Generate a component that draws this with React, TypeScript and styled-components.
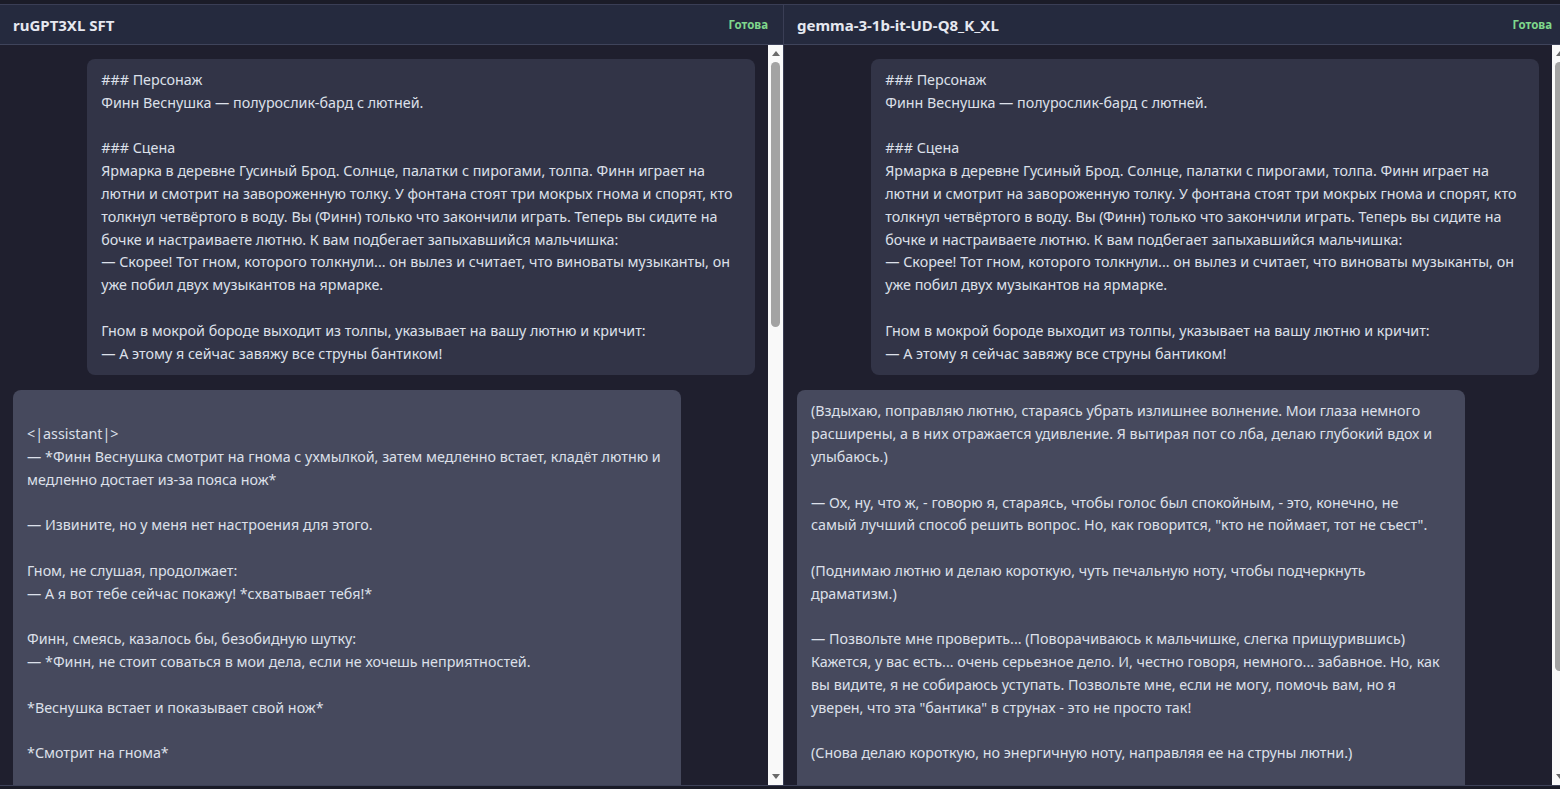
import React, { useLayoutEffect, useRef, useState } from "react";
import styled, { createGlobalStyle } from "styled-components";

const GlobalStyle = createGlobalStyle`
  html, body, #root {
    height: 100%;
  }
  body {
    margin: 0;
    overflow: hidden;
    background: #1a1b27;
    font-family: "Noto Sans", "Open Sans", sans-serif;
  }
`;

const Page = styled.div`
  height: 100vh;
  display: flex;
  flex-direction: column;
  overflow: hidden;
`;

const TopStrip = styled.div`
  height: 4px;
  flex: none;
  background: #1b1c28;
  border-bottom: 1px solid #3a3e55;
`;

const Columns = styled.div`
  flex: 1;
  min-height: 0;
  display: grid;
  grid-template-columns: 784px 784px;
  border-bottom: 1px solid #3d4158;
  margin-bottom: 3px;
`;

const Panel = styled.section`
  display: flex;
  flex-direction: column;
  min-height: 0;
  border-right: 1px solid #3a3e55;
  background: #1f1f2e;
`;

const Header = styled.header`
  height: 39px;
  flex: none;
  display: flex;
  align-items: center;
  justify-content: space-between;
  padding: 0 15px 0 13px;
  background: #252a3e;
  border-bottom: 1px solid #3f445b;
`;

const Title = styled.h2`
  margin: 0;
  font-size: 15px;
  font-weight: 700;
  color: #e6e8f0;
`;

const Status = styled.span`
  font-size: 11.5px;
  font-weight: 700;
  color: #7fd88c;
`;

const PaneRow = styled.div`
  flex: 1;
  min-height: 0;
  display: flex;
`;

const Scroll = styled.div`
  flex: 1;
  min-width: 0;
  overflow-y: auto;
  scrollbar-width: none;
  padding: 14px 13px;
  display: flex;
  flex-direction: column;
  gap: 15px;

  &::-webkit-scrollbar {
    display: none;
  }
`;

const Rail = styled.div`
  width: 15px;
  flex: none;
  display: flex;
  flex-direction: column;
  background: #f9f9f9;
`;

const ArrowButton = styled.div<{ $dir: "up" | "down" }>`
  height: 17px;
  flex: none;
  display: flex;
  align-items: center;
  justify-content: center;

  &::before {
    content: "";
    width: 0;
    height: 0;
    border-left: 4px solid transparent;
    border-right: 4px solid transparent;
    ${(p) =>
      p.$dir === "up"
        ? "border-bottom: 5px solid #6a6a6a;"
        : "border-top: 5px solid #6a6a6a;"}
  }
`;

const Track = styled.div`
  flex: 1;
  min-height: 0;
  display: flex;
  flex-direction: column;
`;

const Thumb = styled.div`
  flex: none;
  margin: 0 3px;
  border-radius: 5px;
  background: #a3a3a3;
`;

const Bubble = styled.div<{ $role: "user" | "assistant" }>`
  flex: none;
  box-sizing: border-box;
  width: 90%;
  align-self: ${(p) => (p.$role === "user" ? "flex-end" : "flex-start")};
  background: ${(p) => (p.$role === "user" ? "#323447" : "#46495d")};
  border-radius: 8px;
  padding: 10px 14px;
  color: #dde0ea;
  font-size: 14.3px;
  line-height: 22.8px;
  white-space: pre-wrap;
`;

function ScrollPane({ children }: { children: React.ReactNode }) {
  const ref = useRef<HTMLDivElement>(null);
  const [thumb, setThumb] = useState({ size: 0.37, offset: 0 });

  useLayoutEffect(() => {
    const el = ref.current;
    if (!el) return;
    const update = () =>
      setThumb({
        size: el.clientHeight / el.scrollHeight,
        offset: el.scrollTop / el.scrollHeight,
      });
    update();
    el.addEventListener("scroll", update);
    return () => el.removeEventListener("scroll", update);
  }, []);

  return (
    <PaneRow>
      <Scroll ref={ref}>{children}</Scroll>
      <Rail>
        <ArrowButton $dir="up" />
        <Track>
          <div style={{ height: `${thumb.offset * 100}%`, flex: "none" }} />
          <Thumb style={{ height: `${thumb.size * 100}%` }} />
        </Track>
        <ArrowButton $dir="down" />
      </Rail>
    </PaneRow>
  );
}

const prompt = `### Персонаж
Финн Веснушка — полурослик-бард с лютней.

### Сцена
Ярмарка в деревне Гусиный Брод. Солнце, палатки с пирогами, толпа. Финн играет на
лютни и смотрит на завороженную толку. У фонтана стоят три мокрых гнома и спорят, кто
толкнул четвёртого в воду. Вы (Финн) только что закончили играть. Теперь вы сидите на
бочке и настраиваете лютню. К вам подбегает запыхавшийся мальчишка:
— Скорее! Тот гном, которого толкнули... он вылез и считает, что виноваты музыканты, он
уже побил двух музыкантов на ярмарке.

Гном в мокрой бороде выходит из толпы, указывает на вашу лютню и кричит:
— А этому я сейчас завяжу все струны бантиком!`;

const ruGptAnswer = `
<|assistant|>
— *Финн Веснушка смотрит на гнома с ухмылкой, затем медленно встает, кладёт лютню и
медленно достает из-за пояса нож*

— Извините, но у меня нет настроения для этого.

Гном, не слушая, продолжает:
— А я вот тебе сейчас покажу! *схватывает тебя!*

Финн, смеясь, казалось бы, безобидную шутку:
— *Финн, не стоит соваться в мои дела, если не хочешь неприятностей.

*Веснушка встает и показывает свой нож*

*Смотрит на гнома*

— Ха! — гном отступает на шаг. — Ты думаешь, я боюсь твоего ножа?

*Финн улыбается и убирает нож обратно*

— Нет, я думаю, что ты боишься воды.

Гном краснеет, толпа смеётся.
— Это был не я! Это всё музыканты!

*Финн берёт лютню и начинает играть*

— Тогда послушай песню о гноме, который упал в фонтан.

*Толпа начинает хлопать*

Гном, сжимая кулаки:
— Ты ещё пожалеешь, бард!

*Финн продолжает играть, не обращая внимания*

— Может быть. Но не сегодня.

*Мальчишка прячется за бочку*

— Финн, он идёт сюда!

*Финн откладывает лютню*

— Спокойно, малыш. Я с ним поговорю.

*Гном подходит ближе*

— Ну что, бард, будешь извиняться?

— Извиняться? За что? За то, что ты мокрый?

*Толпа снова смеётся*

Гном хватает лютню и поднимает её над головой.

— Сейчас я покажу тебе бантики!

*Финн вздыхает*

— Положи лютню, друг. Давай лучше выпьем эля.

*Гном задумывается*

— Ладно, бард. Но если ещё раз услышу про фонтан...

*Финн подмигивает мальчишке*

— Не услышишь. До следующей ярмарки.`;

const gemmaAnswer = `(Вздыхаю, поправляю лютню, стараясь убрать излишнее волнение. Мои глаза немного
расширены, а в них отражается удивление. Я вытирая пот со лба, делаю глубокий вдох и
улыбаюсь.)

— Ох, ну, что ж, - говорю я, стараясь, чтобы голос был спокойным, - это, конечно, не
самый лучший способ решить вопрос. Но, как говорится, "кто не поймает, тот не съест".

(Поднимаю лютню и делаю короткую, чуть печальную ноту, чтобы подчеркнуть
драматизм.)

— Позвольте мне проверить... (Поворачиваюсь к мальчишке, слегка прищурившись)
Кажется, у вас есть... очень серьезное дело. И, честно говоря, немного... забавное. Но, как
вы видите, я не собираюсь уступать. Позвольте мне, если не могу, помочь вам, но я
уверен, что эта "бантика" в струнах - это не просто так!

(Снова делаю короткую, но энергичную ноту, направляя ее на струны лютни.)

— Уважаемый гном, - продолжаю я, - если вы позволите, я сыграю для вас песню.
Песню о смелом гноме, который не побоялся холодной воды.

(Улыбаюсь и жду его реакции.)`;

const models = [
  { name: "ruGPT3XL SFT", answer: ruGptAnswer },
  { name: "gemma-3-1b-it-UD-Q8_K_XL", answer: gemmaAnswer },
];

export default function App() {
  return (
    <>
      <GlobalStyle />
      <Page>
        <TopStrip />
        <Columns>
          {models.map((m) => (
            <Panel key={m.name}>
              <Header>
                <Title>{m.name}</Title>
                <Status>Готова</Status>
              </Header>
              <ScrollPane>
                <Bubble $role="user">{prompt}</Bubble>
                <Bubble $role="assistant">{m.answer}</Bubble>
              </ScrollPane>
            </Panel>
          ))}
        </Columns>
      </Page>
    </>
  );
}
